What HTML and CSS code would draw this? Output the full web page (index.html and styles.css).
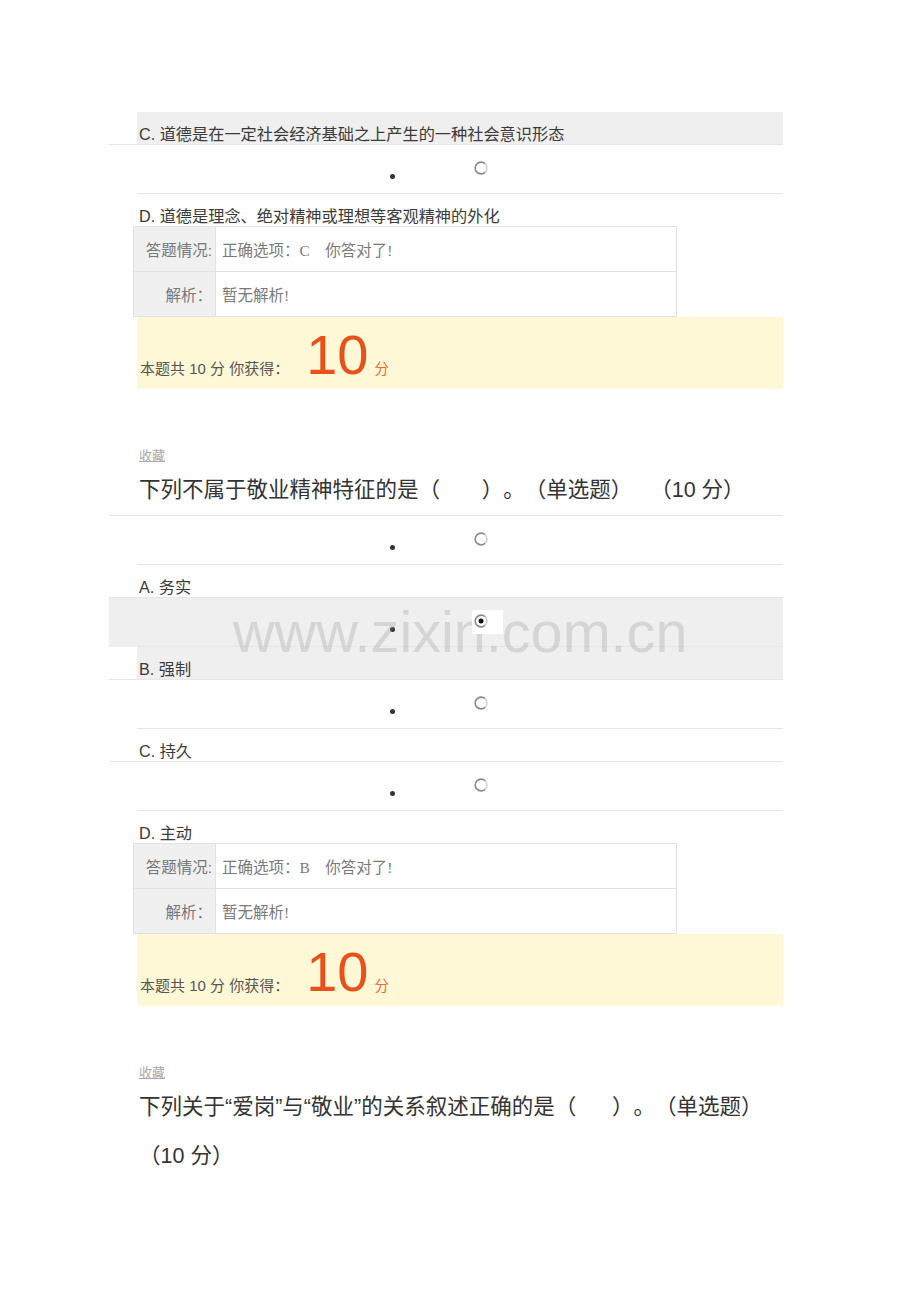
FILE: index.html
```html
<!DOCTYPE html>
<html lang="zh-CN">
<head>
<meta charset="utf-8">
<title>答题</title>
<link rel="stylesheet" href="styles.css">
</head>
<body>
<div class="page">
  <div class="wm">www.zixin.com.cn</div>

  <div class="opt-label sel">C. 道德是在一定社会经济基础之上产生的一种社会意识形态</div>
  <div class="radio-row"><div class="radio-in"><span class="dot"></span><svg class="radio" viewBox="0 0 14 14"><path d="M11.2 2.8 A5.9 5.9 0 1 0 11.2 11.2" fill="none" stroke="#8a8a8a" stroke-width="1.6"/><path d="M11.2 2.8 A5.9 5.9 0 0 1 11.2 11.2" fill="none" stroke="#d2d2d2" stroke-width="1.6"/></svg></div></div>
  <div class="opt-label">D. 道德是理念、绝对精神或理想等客观精神的外化</div>
  <table class="result">
    <tr><td class="lbl">答题情况:</td><td class="val">正确选项：C&nbsp;&nbsp;&nbsp; 你答对了!</td></tr>
    <tr><td class="lbl">解析：</td><td class="val">暂无解析!</td></tr>
  </table>
  <div class="score"><span class="score-text">本题共 10 分 你获得：</span><span class="big">10</span><span class="unit">分</span></div>

  <a class="fav">收藏</a>
  <div class="q-title">下列不属于敬业精神特征的是（&nbsp;&nbsp;&nbsp;&nbsp;&nbsp;&nbsp;&nbsp;）。（单选题）&nbsp;&nbsp;&nbsp;（10 分）</div>

  <div class="radio-row"><div class="radio-in"><span class="dot"></span><svg class="radio" viewBox="0 0 14 14"><path d="M11.2 2.8 A5.9 5.9 0 1 0 11.2 11.2" fill="none" stroke="#8a8a8a" stroke-width="1.6"/><path d="M11.2 2.8 A5.9 5.9 0 0 1 11.2 11.2" fill="none" stroke="#d2d2d2" stroke-width="1.6"/></svg></div></div>
  <div class="opt-label">A. 务实</div>

  <div class="radio-row sel"><div class="radio-in"><span class="dot"></span><span class="radio-box"><svg class="radio-on" viewBox="0 0 14 14"><path d="M11.2 2.8 A5.9 5.9 0 1 0 11.2 11.2" fill="none" stroke="#8a8a8a" stroke-width="1.6"/><path d="M11.2 2.8 A5.9 5.9 0 0 1 11.2 11.2" fill="none" stroke="#cfcfcf" stroke-width="1.6"/><circle cx="7" cy="7" r="2.5" fill="#111"/></svg></span></div></div>
  <div class="opt-label sel">B. 强制</div>

  <div class="radio-row"><div class="radio-in"><span class="dot"></span><svg class="radio" viewBox="0 0 14 14"><path d="M11.2 2.8 A5.9 5.9 0 1 0 11.2 11.2" fill="none" stroke="#8a8a8a" stroke-width="1.6"/><path d="M11.2 2.8 A5.9 5.9 0 0 1 11.2 11.2" fill="none" stroke="#d2d2d2" stroke-width="1.6"/></svg></div></div>
  <div class="opt-label">C. 持久</div>

  <div class="radio-row"><div class="radio-in"><span class="dot"></span><svg class="radio" viewBox="0 0 14 14"><path d="M11.2 2.8 A5.9 5.9 0 1 0 11.2 11.2" fill="none" stroke="#8a8a8a" stroke-width="1.6"/><path d="M11.2 2.8 A5.9 5.9 0 0 1 11.2 11.2" fill="none" stroke="#d2d2d2" stroke-width="1.6"/></svg></div></div>
  <div class="opt-label">D. 主动</div>

  <table class="result">
    <tr><td class="lbl">答题情况:</td><td class="val">正确选项：B&nbsp;&nbsp;&nbsp; 你答对了!</td></tr>
    <tr><td class="lbl">解析：</td><td class="val">暂无解析!</td></tr>
  </table>
  <div class="score"><span class="score-text">本题共 10 分 你获得：</span><span class="big">10</span><span class="unit">分</span></div>

  <a class="fav">收藏</a>
  <div class="q-title">下列关于“爱岗”与“敬业”的关系叙述正确的是（&nbsp;&nbsp;&nbsp;&nbsp;&nbsp;&nbsp;）。（单选题） <span class="nw">（10 分）</span></div>
</div>
</body>
</html>
```

FILE: styles.css
```css
html, body {
  margin: 0;
  padding: 0;
  background: #fff;
}
body {
  font-family: "Liberation Sans", "Noto Sans CJK SC", sans-serif;
  color: #333;
  text-spacing-trim: space-all;
}
.page {
  position: relative;
  width: 646px;
  padding: 112px 137px 0 137px;
}
.wm {
  position: absolute;
  left: 233px;
  top: 604px;
  font-family: "Liberation Sans", sans-serif;
  font-size: 57.6px;
  line-height: 57px;
  color: rgba(140, 140, 140, 0.26);
  z-index: 1;
  white-space: nowrap;
  pointer-events: none;
}
.opt-label {
  height: 32px;
  box-sizing: border-box;
  padding: 12px 0 0 2px;
  line-height: 20px;
  font-size: 16.2px;
  color: #3a3a3a;
}
.opt-label.sel {
  background: #efefef;
}
.radio-row {
  margin-left: -28px;
  border-top: 1px solid #e6e6e6;
}
.radio-row.sel {
  background: #efefef;
}
.radio-in {
  margin-left: 28px;
  height: 48px;
  border-bottom: 1px solid #e6e6e6;
  display: flex;
  align-items: flex-start;
}
.dot {
  flex: none;
  width: 5px;
  height: 5px;
  border-radius: 50%;
  background: #333;
  margin: 29px 0 0 253px;
}
.radio {
  flex: none;
  display: block;
  width: 14px;
  height: 14px;
  margin: 16px 0 0 79px;
}
.radio-box {
  flex: none;
  position: relative;
  z-index: 2;
  width: 31px;
  height: 24px;
  background: #fff;
  margin: 12px 0 0 77px;
}
.radio-on {
  display: block;
  width: 14px;
  height: 14px;
  margin: 4px 0 0 2px;
}
.result {
  border-collapse: collapse;
  margin-left: -4px;
  width: 544px;
  font-size: 15.5px;
}
.result td {
  border: 1px solid #e2e2e2;
  height: 44px;
  padding: 0;
  vertical-align: middle;
}
.result .lbl {
  width: 78px;
  background: #f0f0f0;
  text-align: right;
  padding-right: 3px;
  color: #777;
}
.result .val {
  padding: 0 0 0 6px;
  color: #7a7a7a;
  font-family: "Liberation Serif", "Noto Sans CJK SC", serif;
}
.score {
  height: 72px;
  box-sizing: border-box;
  background: #fef8d6;
  display: flex;
  align-items: baseline;
  padding: 10px 0 0 3px;
}
.score-text {
  font-size: 15px;
  color: #555;
}
.big {
  font-size: 56px;
  line-height: 56px;
  color: #e8511c;
  margin-left: 17px;
}
.unit {
  font-size: 14.5px;
  color: #ee6a2e;
  margin-left: 6px;
}
.fav {
  display: block;
  margin-top: 57px;
  padding-left: 2px;
  font-size: 13px;
  line-height: 20px;
  color: #aaa;
  text-decoration: underline;
}
.q-title {
  font-size: 21.5px;
  line-height: 49px;
  padding-left: 2px;
  color: #333;
}
.nw {
  white-space: nowrap;
}
```
